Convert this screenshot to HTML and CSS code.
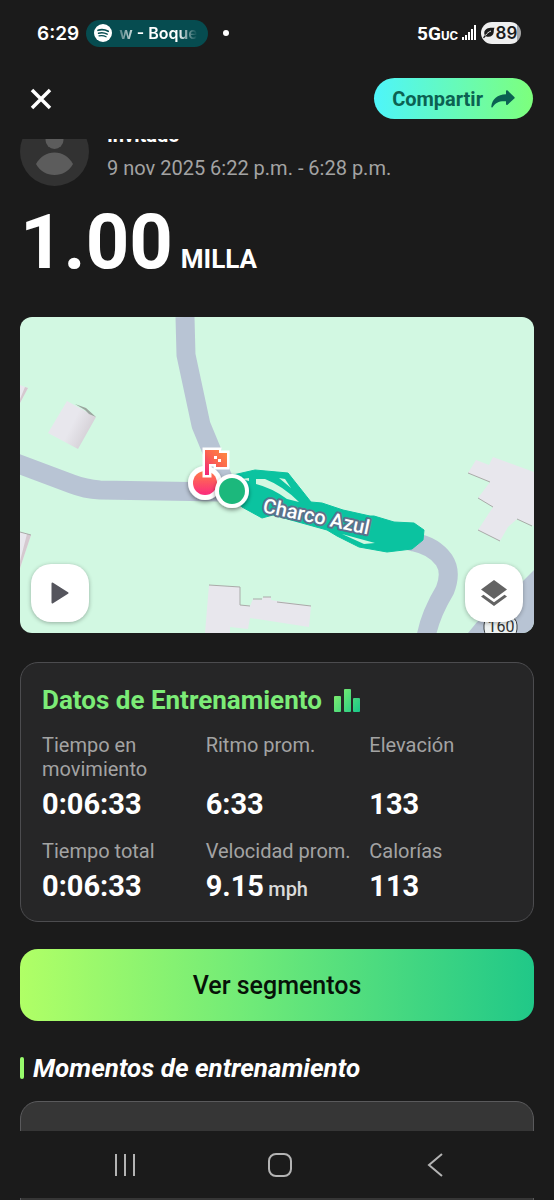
FILE: index.html
```html
<!DOCTYPE html>
<html lang="es">
<head>
    <meta charset="UTF-8">
    <meta name="viewport" content="width=device-width, initial-scale=1.0">
    <title>Entrenamiento</title>
    <link rel="stylesheet" href="styles.css">
</head>
<body>
    <div class="status-bar">
        <span class="clock">6:29</span>
        <div class="now-playing">
            <svg class="music-icon" viewBox="0 0 18 18" width="18" height="18" fill="none" stroke="#064c50" stroke-linecap="round">
                <circle cx="9" cy="9" r="9" fill="#fff" stroke="none"/>
                <path d="M4 6.3c3.4-1 7-.7 10.200 1" stroke-width="1.700"/>
                <path d="M4.500 9.200c3-.8 6-.5 8.700 1" stroke-width="1.400"/>
                <path d="M5 11.900c2.500-.6 4.900-.4 7.100.9" stroke-width="1.200"/>
            </svg>
            <span class="track">w - Boque</span>
        </div>
        <span class="dot"></span>
        <div class="status-right">
            <span class="network">5G<small>UC</small></span>
            <svg viewBox="0 0 15 16" width="15" height="16" fill="#fff">
                <rect x="0" y="12" width="2" height="3"/>
                <rect x="3" y="10" width="2" height="5"/>
                <rect x="6" y="7" width="2" height="8"/>
                <rect x="9" y="4" width="2" height="11"/>
                <rect x="12" y="0" width="2" height="15"/>
            </svg>
            <div class="battery">
                <svg viewBox="0 0 12 12" width="12" height="12">
                    <path d="M11.500.8C6 .2 2 1.500 1.300 5c-.2 1.200 0 2.300.5 3.300L0 10.500l1 .8 1.800-2c4 1.500 7.500-.2 7.900-4C10.900 3.200 10.800 2 11.500.8z" fill="#1b1b1b"/>
                    <path d="M2.500 8.500C4 6.200 5.500 5 8 4" stroke="#efefef" fill="none"/>
                </svg>
                <span>89</span>
            </div>
        </div>
    </div>

    <header class="header">
        <button class="close-button" aria-label="Cerrar">
            <svg viewBox="0 0 22 22" width="22" height="22" fill="none" stroke="#fff" stroke-width="3.500">
                <path d="M2 2l18 18M20 2L2 20"/>
            </svg>
        </button>
        <button class="share-button">
            Compartir
            <svg viewBox="0 0 24 18" width="24" height="18" fill="#0b6152">
                <path d="M15 1.300c0-1 .9-1.400 1.600-.8l6.700 6.400c.6.6.6 1.100 0 1.700l-6.700 6.100c-.8.700-1.600.3-1.600-.7v-2.700C8.500 10.800 4.500 12.500 1.700 17c-.6 1-1.500.7-1.400-.4C1 9 6.500 4.500 15 4.200z"/>
            </svg>
        </button>
    </header>

    <main class="content">
        <section class="profile">
            <svg class="avatar" viewBox="0 0 69 69" width="69" height="69">
                <circle cx="34.500" cy="34.500" r="34.500" fill="#323232"/>
                <circle cx="34.500" cy="23" r="9" fill="#5c5c5c"/>
                <path d="M34.500 35.500c8 0 14 4 18.500 11.500-4.500 7.500-10.500 11-18.500 11S20.500 54.500 16 47c4.500-7.500 10.500-11.500 18.500-11.500z" fill="#5c5c5c"/>
            </svg>
            <div class="profile-text">
                <div class="name">Invitado</div>
                <div class="date">9 nov 2025 6:22 p.m. - 6:28 p.m.</div>
            </div>
        </section>

        <h1 class="distance">1.00 <span>MILLA</span></h1>

        <section class="map">
            <svg class="map-drawing" viewBox="0 0 514 316">
                <defs>
                    <linearGradient id="finish" x1="0" y1="0" x2="0" y2="1">
                        <stop offset="0" stop-color="#ff7a48"/>
                        <stop offset="1" stop-color="#fb2b7e"/>
                    </linearGradient>
                    <linearGradient id="flag" x1="1" y1="0" x2="0" y2="1">
                        <stop offset="0" stop-color="#ff8c3e"/>
                        <stop offset=".5" stop-color="#fb6350"/>
                        <stop offset="1" stop-color="#f0207e"/>
                    </linearGradient>
                    <linearGradient id="roof" x1="0" y1="0" x2="1" y2="0.5">
                        <stop offset=".6" stop-color="#e8e7ed"/>
                        <stop offset="1" stop-color="#d3ced4"/>
                    </linearGradient>
                    <filter id="shadow" x="-30%" y="-30%" width="160%" height="170%">
                        <feDropShadow dx="0" dy="2" stdDeviation="2" flood-opacity=".45"/>
                    </filter>
                </defs>
                <rect width="514" height="316" fill="#d2f8e2"/>

                <!-- roads -->
                <g fill="none" stroke="#b8c4d4" stroke-width="19" stroke-linejoin="round">
                    <path d="M165 0L166 38L181 108L205 166"/>
                    <path d="M-4 146L52 167Q65 172 80 173L200 175L250 187L330 207L394 225Q414 229 424 243Q432 255 425 273Q410 298 406 320"/>
                </g>
                <path d="M514 253L502 265L457 305L448 316H514z" fill="#b8c4d4"/>

                <!-- buildings -->
                <path d="M47 84L76 100L58 132L28 116z" fill="url(#roof)"/>
                <g fill="#e8e7ed">
                    <path d="M0 68L8 71L0 86z"/>
                    <path d="M0 215L11 218L0 251z"/>
                    <path d="M189 268L220 270V288L230 289L233 282L242 283L243 280L251 280V283L291 289L289 310L230 301L228 312L210 310V316H185z"/>
                    <path d="M456 143L469 148L473 140L514 155V209L497 202L488 210L480 224L458 213L473 190L458 181L470 165L448 156z"/>
                </g>
                <path d="M55 87L66 91L76 100L69 97L65 93z" fill="#9ba69f"/>
                <path d="M8 71L0 86V82L5 70zM11 218L0 251V244L7 217z" fill="#d5c9d0"/>
                <path d="M448 156L470 165M458 181L473 190M458 213L480 224M497 202L512 209M189 268L220 270V288L230 289M233 282H242M243 280H251M257 285L291 289M0 215L11 218" fill="none" stroke="#a9aaa8"/>

                <!-- route -->
                <path d="M205 166L213 158L235 153L268 156L291 185L302 186L323 193L350 199L354 199L374 205L394 206L404 213L403 223L392 232L367 235L339 230L317 219L307 213L253 198L242 201L222 190z" fill="#0bc3a0" stroke="#0bc3a0" stroke-linejoin="round"/>
                <path d="M236 162H245Q263 169 279 185L267 182Q252 171 236 167zM259 161L265 162L271 171zM221 162L229 161V164zM322 217L355 226L344 227z" fill="#d2f8e2"/>
                <text class="street" transform="translate(242 195) rotate(12)">Charco Azul</text>

                <!-- road number -->
                <rect x="464" y="299" width="33" height="22" rx="9" fill="#eef2f2" stroke="#3c4043"/>
                <text class="road-number" x="481" y="315" text-anchor="middle">160</text>

                <!-- finish and start -->
                <g filter="url(#shadow)">
                    <circle cx="185" cy="166" r="17" fill="#fff"/>
                    <circle cx="185" cy="166" r="12" fill="url(#finish)"/>
                </g>
                <path d="M185 133H199V136H207V150H196V147H189V158H185z" fill="url(#flag)" stroke="#fff" stroke-width="5" paint-order="stroke"/>
                <path d="M194 139h3v3h-3zM198 142h3v3h-3z" fill="#fff"/>
                <g filter="url(#shadow)">
                    <circle cx="212" cy="174" r="17" fill="#fff"/>
                    <circle cx="212" cy="174" r="13" fill="#1cb87b"/>
                </g>
            </svg>
            <button class="map-button play" aria-label="Reproducir">
                <svg viewBox="0 0 18 22" width="18" height="22">
                    <path d="M1.500 1.500L16.500 11L1.500 20.500z" fill="#55555d" stroke="#55555d" stroke-width="2" stroke-linejoin="round"/>
                </svg>
            </button>
            <button class="map-button layers" aria-label="Capas">
                <svg viewBox="0 0 26 26" width="26" height="26" fill="#636363">
                    <path d="M13 0L26 9.500L13 19L0 9.500z"/>
                    <path d="M0 16.500L2.500 14.700L13 22.300L23.500 14.700L26 16.500L13 26z"/>
                </svg>
            </button>
        </section>

        <section class="stats-card">
            <h2>
                Datos de Entrenamiento
                <svg viewBox="0 0 26 23" width="26" height="23">
                    <defs>
                        <linearGradient id="bars" x1="0" y1="0" x2="26" y2="20" gradientUnits="userSpaceOnUse">
                            <stop offset="0" stop-color="#8af26b"/>
                            <stop offset="1" stop-color="#1dc988"/>
                        </linearGradient>
                    </defs>
                    <g fill="url(#bars)">
                        <rect x="0" y="7" width="7" height="16" rx="1"/>
                        <rect x="10" y="0" width="7" height="23" rx="1"/>
                        <rect x="19" y="9" width="7" height="14" rx="1"/>
                    </g>
                </svg>
            </h2>
            <dl class="stats">
                <div class="stat">
                    <dt>Tiempo en movimiento</dt>
                    <dd>0:06:33</dd>
                </div>
                <div class="stat">
                    <dt>Ritmo prom.</dt>
                    <dd>6:33</dd>
                </div>
                <div class="stat">
                    <dt>Elevación</dt>
                    <dd>133</dd>
                </div>
                <div class="stat">
                    <dt>Tiempo total</dt>
                    <dd>0:06:33</dd>
                </div>
                <div class="stat">
                    <dt>Velocidad prom.</dt>
                    <dd>9.15 <small>mph</small></dd>
                </div>
                <div class="stat">
                    <dt>Calorías</dt>
                    <dd>113</dd>
                </div>
            </dl>
        </section>

        <button class="segments-button">Ver segmentos</button>

        <h2 class="moments-title">Momentos de entrenamiento</h2>
        <section class="moments-card"></section>
    </main>

    <nav class="nav-bar">
        <button aria-label="Recientes">
            <svg viewBox="0 0 24 24" width="24" height="24" fill="none" stroke="#b4b4b4" stroke-width="2">
                <path d="M3 1v22M12 1v22M21 1v22"/>
            </svg>
        </button>
        <button aria-label="Inicio">
            <svg viewBox="0 0 24 24" width="24" height="24" fill="none" stroke="#b4b4b4" stroke-width="2">
                <rect x="1" y="1" width="22" height="22" rx="7"/>
            </svg>
        </button>
        <button aria-label="Atrás">
            <svg viewBox="0 0 24 24" width="24" height="24" fill="none" stroke="#b4b4b4" stroke-width="2">
                <path d="M19 1L6 12L19 23"/>
            </svg>
        </button>
    </nav>
</body>
</html>
```
FILE: styles.css
```css
* {
    box-sizing: border-box;
}

body {
    margin: 0;
    height: 100vh;
    display: flex;
    flex-direction: column;
    overflow: hidden;
    background-color: #1b1b1b;
    color: #fff;
    font-family: Roboto, "Liberation Sans", sans-serif;
}

svg {
    display: block;
    flex-shrink: 0;
}

button {
    padding: 0;
    border: none;
    background: none;
    font-family: inherit;
    cursor: pointer;
}

/* status bar */
.status-bar {
    flex-shrink: 0;
    display: flex;
    align-items: center;
    height: 58px;
    padding: 8px 33px 0 37px;
    font-family: Inter, Roboto, sans-serif;
    font-weight: 600;
}

.clock {
    font-size: 19px;
}

.now-playing {
    display: flex;
    align-items: center;
    gap: 7px;
    width: 122px;
    height: 27px;
    margin-left: 7px;
    padding-left: 8px;
    border-radius: 14px;
    background-color: #064c50;
}

.track {
    width: 78px;
    overflow: hidden;
    white-space: nowrap;
    font-size: 16px;
    -webkit-mask-image: linear-gradient(to right, rgba(0, 0, 0, 0.3), #000 25%, #000 75%, transparent);
    mask-image: linear-gradient(to right, rgba(0, 0, 0, 0.3), #000 25%, #000 75%, transparent);
}

.dot {
    width: 6px;
    height: 6px;
    margin-left: 15px;
    border-radius: 50%;
    background-color: #fff;
}

.status-right {
    display: flex;
    align-items: center;
    gap: 4px;
    margin-left: auto;
}

.network {
    font-family: Roboto, sans-serif;
    font-size: 19px;
    font-weight: 700;
}

.network small {
    font-size: 13px;
}

.battery {
    display: flex;
    align-items: center;
    justify-content: center;
    gap: 1px;
    width: 40px;
    height: 22px;
    padding-right: 2px;
    border-radius: 11px;
    background: linear-gradient(to right, #efefef 89%, #a5a5a5 89%);
    color: #1b1b1b;
    font-size: 17px;
}

/* header */
.header {
    flex-shrink: 0;
    display: flex;
    align-items: center;
    justify-content: space-between;
    height: 81px;
    padding: 0 21px 0 30px;
}

.share-button {
    display: flex;
    align-items: center;
    gap: 8px;
    height: 41px;
    padding: 0 18px;
    border-radius: 21px;
    background: linear-gradient(to right, #4ef5fa, #7dff7c);
    color: #0b6152;
    font-size: 20px;
    font-weight: 700;
}

/* content */
.content {
    flex: 1;
    min-height: 0;
    overflow: hidden;
    padding: 0 20px;
}

.profile {
    display: flex;
    gap: 18px;
    margin-top: -22px; /* scrolled under the header */
}

.name {
    font-size: 20px;
    font-weight: 700;
    line-height: 24px;
    margin-top: 6px;
}

.date {
    margin-top: 9px;
    color: #a3a3a3;
    font-size: 20px;
    line-height: 24px;
}

.distance {
    margin: 18px 0 37px;
    font-size: 76px;
    font-weight: 700;
    line-height: 76px;
    display: flex;
    align-items: baseline;
    gap: 8px;
}

.distance span {
    font-size: 26px;
    line-height: 30px;
}

/* map */
.map {
    position: relative;
    overflow: hidden;
    border-radius: 12px;
}

.map-drawing {
    width: 100%;
    height: auto;
}

.street {
    font-size: 20px;
    font-weight: 500;
    fill: #fff;
    stroke: #5b728c;
    stroke-width: 4px;
    stroke-linejoin: round;
    paint-order: stroke;
}

.road-number {
    font-size: 16px;
    fill: #303030;
}

.map-button {
    position: absolute;
    bottom: 11px;
    display: flex;
    align-items: center;
    justify-content: center;
    width: 58px;
    height: 58px;
    border-radius: 20px;
    background-color: #fff;
    box-shadow: 0 1px 4px rgba(0, 0, 0, 0.3);
}

.play {
    left: 11px;
}

.layers {
    right: 11px;
}

/* stats */
.stats-card {
    margin-top: 29px;
    padding: 22px 0 18px 21px;
    border: 1px solid #4c4c4f;
    border-radius: 18px;
    background-color: #262627;
}

.stats-card h2 {
    display: flex;
    align-items: center;
    gap: 12px;
    margin: 0 0 18px;
    color: #7cec77;
    font-size: 26px;
    font-weight: 700;
    line-height: 30px;
}

.stats {
    display: grid;
    grid-template-columns: repeat(3, 1fr);
    gap: 18px 0;
    margin: 0;
}

.stat {
    display: flex;
    flex-direction: column;
    justify-content: space-between;
    gap: 6px;
}

.stat dt {
    padding-right: 16px;
    color: #a3a3a3;
    font-size: 20px;
    line-height: 24px;
}

.stat dd {
    margin: 0;
    font-size: 29px;
    font-weight: 700;
    line-height: 34px;
}

.stat small {
    margin-left: -3px;
    color: #dadada;
    font-size: 20px;
    font-weight: 500;
    line-height: 20px;
}

.segments-button {
    display: block;
    width: 100%;
    height: 72px;
    margin: 27px 0 32px;
    border-radius: 18px;
    background: linear-gradient(to right, #b0ff66, #6fea78 45%, #20c888);
    color: #071208;
    font-size: 25px;
    font-weight: 500;
}

/* moments */
.moments-title {
    display: flex;
    align-items: center;
    gap: 9px;
    margin: 0 0 18px;
    font-size: 26px;
    font-style: italic;
    font-weight: 700;
    line-height: 30px;
}

.moments-title::before {
    content: "";
    width: 4px;
    height: 22px;
    border-radius: 2px;
    background-color: #98fb6c;
}

.moments-card {
    height: 240px;
    border: 1px solid #5a5a5c;
    border-radius: 18px;
    background-color: #363636;
}

/* system navigation */
.nav-bar {
    position: fixed;
    right: 0;
    bottom: 2px;
    left: 0;
    display: flex;
    align-items: center;
    justify-content: space-between;
    height: 67px;
    padding: 0 107px 0 113px;
    background-color: #1b1b1b;
}
```
